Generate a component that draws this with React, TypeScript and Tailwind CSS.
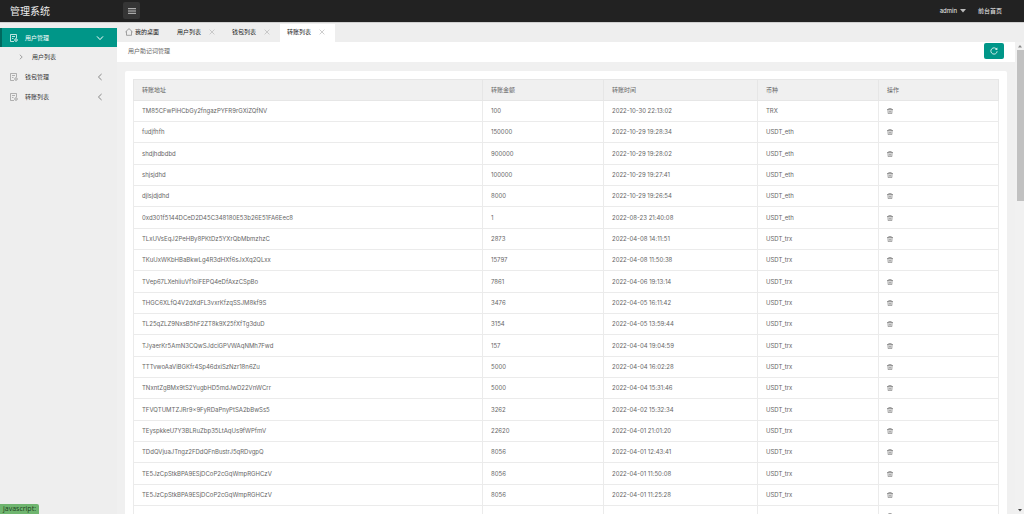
import { useState } from "react";
import { clsx } from "clsx";

type Transfer = {
    address: string;
    amount: string;
    time: string;
    coin: string;
};

const transfers: Transfer[] = [
    { address: "TM85CFwPiHCbGy2fngazPYFR9rGXiZQfNV", amount: "100", time: "2022-10-30 22:13:02", coin: "TRX" },
    { address: "fudjfhfh", amount: "150000", time: "2022-10-29 19:28:34", coin: "USDT_eth" },
    { address: "shdjhdbdbd", amount: "900000", time: "2022-10-29 19:28:02", coin: "USDT_eth" },
    { address: "shjsjdhd", amount: "100000", time: "2022-10-29 19:27:41", coin: "USDT_eth" },
    { address: "djlsjdjdhd", amount: "8000", time: "2022-10-29 19:26:54", coin: "USDT_eth" },
    { address: "0xd301f5144DCeD2D45C348180E53b26E51FA6Eec8", amount: "1", time: "2022-08-23 21:40:08", coin: "USDT_eth" },
    { address: "TLxUVsEqJ2PeHBy8PKtDz5YXrQbMbmzhzC", amount: "2873", time: "2022-04-08 14:11:51", coin: "USDT_trx" },
    { address: "TKuUxWKbHBaBkwLg4R3dHXf6sJxXq2QLxx", amount: "15797", time: "2022-04-08 11:50:38", coin: "USDT_trx" },
    { address: "TVep67LXehiiuVf1oiFEPQ4eDfAxzCSpBo", amount: "7861", time: "2022-04-06 19:13:14", coin: "USDT_trx" },
    { address: "THGC6XLfQ4V2dXdFL3vxrKfzqSSJM8kf9S", amount: "3476", time: "2022-04-05 16:11:42", coin: "USDT_trx" },
    { address: "TL25qZLZ9NxsB5hF2ZT8k9X25fXfTg3duD", amount: "3154", time: "2022-04-05 13:59:44", coin: "USDT_trx" },
    { address: "TJyaerKr5AmN3CQwSJdciGPVWAqNMh7Fwd", amount: "157", time: "2022-04-04 19:04:59", coin: "USDT_trx" },
    { address: "TTTvwoAaViBGKfr4Sp46dxiSzNzr18n6Zu", amount: "5000", time: "2022-04-04 16:02:28", coin: "USDT_trx" },
    { address: "TNxntZgBMx9tS2YugbHD5mdJwD22VnWCrr", amount: "5000", time: "2022-04-04 15:31:46", coin: "USDT_trx" },
    { address: "TFVQTUMTZJRr9x9FyRDaPnyPtSA2bBwSs5", amount: "3262", time: "2022-04-02 15:32:34", coin: "USDT_trx" },
    { address: "TEyspkkeU7Y3BLRuZbp35LtAqUs9fWPfmV", amount: "22620", time: "2022-04-01 21:01:20", coin: "USDT_trx" },
    { address: "TDdQVjuaJTngz2FDdQFnBustrJ5qRDvgpQ", amount: "8056", time: "2022-04-01 12:43:41", coin: "USDT_trx" },
    { address: "TE5JzCpStkBPA9ESjDCoP2cGqWmpRGHCzV", amount: "8056", time: "2022-04-01 11:50:08", coin: "USDT_trx" },
    { address: "TE5JzCpStkBPA9ESjDCoP2cGqWmpRGHCzV", amount: "8056", time: "2022-04-01 11:25:28", coin: "USDT_trx" },
    { address: "", amount: "", time: "", coin: "" },
];

const columns = ["转账地址", "转账金额", "转账时间", "币种", "操作"];

const DocIcon = () => (
    <svg viewBox="0 0 16 16" className="w-2 h-2 shrink-0" fill="none" stroke="currentColor" strokeWidth="1.5">
        <path d="M8 15H1V1h12v7" />
        <path d="M4 5h6M4 9h3" />
        <circle cx="12" cy="12" r="2.4" />
        <path d="M12 8.4v1.2M12 14.4v1.2M8.4 12h1.2M14.4 12h1.2" />
    </svg>
);

const ChevronIcon = ({ className }: { className: string }) => (
    <svg viewBox="0 0 8 8" className={clsx("shrink-0", className)} fill="none" stroke="currentColor">
        <path d="M5.6 1 2.4 4l3.2 3" />
    </svg>
);

const CloseIcon = () => (
    <svg viewBox="0 0 6 6" className="w-1.5 h-1.5" fill="none" stroke="currentColor" strokeWidth="0.7">
        <path d="M0.6 0.6l4.8 4.8M5.4 0.6L0.6 5.4" />
    </svg>
);

const TrashIcon = () => (
    <svg viewBox="0 0 12 12" className="w-1.5 h-1.5" fill="none" stroke="currentColor" strokeWidth="1.2">
        <path d="M0 3h12M3.6 2.8V0.8h4.8v2M1.8 3l0.6 8.2h7.2L10.2 3M4.8 5v4.4M7.2 5v4.4" />
    </svg>
);

const Header = () => (
    <header className="flex h-[22px] shrink-0 items-center bg-[#222222] pb-px text-[#eeeeee]">
        <h1 className="w-[123px] shrink-0 pl-2.5 text-[10px] leading-4">管理系统</h1>
        <button type="button" aria-label="菜单" className="flex h-[17px] w-[17px] items-center justify-center rounded-xs bg-[#353535]">
            <svg viewBox="0 0 8 6" className="h-1.5 w-2" stroke="currentColor" strokeWidth="0.8">
                <path d="M0 0.7h8M0 3h8M0 5.3h8" />
            </svg>
        </button>
        <nav className="ml-auto flex items-center gap-3 pr-[22px]">
            <button type="button" className="flex items-center gap-[3px]">
                admin
                <svg viewBox="0 0 6 4" className="h-1 w-1.5" fill="#bbbbbb">
                    <path d="M0 0h6L3 3.6z" />
                </svg>
            </button>
            <a href="#home">前台首页</a>
        </nav>
    </header>
);

const Sidebar = () => {
    const [open, setOpen] = useState(true);

    return (
        <aside className="w-[117px] shrink-0 bg-[#eeeeee] pt-[5px] text-[#333333]">
            <button
                type="button"
                onClick={() => setOpen(!open)}
                className="flex h-[19px] w-full items-center border-l-2 border-[#00695f] bg-[#009688] pl-2 pr-[13px] text-white"
            >
                <DocIcon />
                <span className="ml-[7px] mr-auto">用户管理</span>
                <ChevronIcon className="h-2 w-2 -rotate-90" />
            </button>
            {open && (
                <a href="#users" className="flex h-5 items-center pl-[18px]">
                    <ChevronIcon className="h-1.5 w-1.5 rotate-180 text-[#888888]" />
                    <span className="ml-2">用户列表</span>
                </a>
            )}
            {["钱包管理", "转账列表"].map((title) => (
                <button key={title} type="button" className="flex h-5 w-full items-center pl-2.5 pr-[13px]">
                    <span className="text-[#999999]">
                        <DocIcon />
                    </span>
                    <span className="ml-[7px] mr-auto">{title}</span>
                    <ChevronIcon className="h-2 w-2 text-[#888888]" />
                </button>
            ))}
        </aside>
    );
};

const Tabs = () => {
    const [active, setActive] = useState("转账列表");

    return (
        <div className="flex h-[19px] shrink-0 items-stretch bg-[#eeeeee] pt-px text-[#222222]">
            <button type="button" className="flex w-[53px] items-center gap-0.5 pb-[3px] pl-2">
                <svg viewBox="0 0 16 16" className="h-2 w-2" fill="none" stroke="#777777" strokeWidth="1.3">
                    <path d="M0.8 8 8 1.2 15.2 8M3 6.6v8h10v-8" />
                </svg>
                我的桌面
            </button>
            {["用户列表", "钱包列表", "转账列表"].map((title) => (
                <div
                    key={title}
                    className={clsx("flex w-[55px] items-center justify-between pb-[3px] pl-[7px] pr-2.5", active === title && "bg-white")}
                >
                    <button type="button" onClick={() => setActive(title)}>
                        {title}
                    </button>
                    <button type="button" aria-label="关闭" className="text-[#b8b8b8]">
                        <CloseIcon />
                    </button>
                </div>
            ))}
        </div>
    );
};

const TransferTable = () => (
    <table className="w-full table-fixed border-collapse text-left text-[#666666] [&_td]:border [&_td]:border-[#ebebeb] [&_td]:px-2 [&_th]:border [&_th]:border-[#e6e6e6] [&_th]:px-2">
        <colgroup>
            <col />
            <col className="w-[121px]" />
            <col className="w-[154px]" />
            <col className="w-[121px]" />
            <col className="w-[120px]" />
        </colgroup>
        <thead>
            <tr className="h-[21px] bg-[#f0f0f0]">
                {columns.map((title) => (
                    <th key={title} className="font-normal">
                        {title}
                    </th>
                ))}
            </tr>
        </thead>
        <tbody>
            {transfers.map((row, i) => (
                <tr key={i} className="h-[21px] nth-[3n]:h-[22px]">
                    <td>{row.address}</td>
                    <td>{row.amount}</td>
                    <td>{row.time}</td>
                    <td>{row.coin}</td>
                    <td>
                        <button type="button" aria-label="删除" className="block">
                            <TrashIcon />
                        </button>
                    </td>
                </tr>
            ))}
        </tbody>
    </table>
);

const Scrollbar = () => (
    <div className="flex w-[9px] shrink-0 flex-col items-center bg-[#f1f1f1] pl-px">
        <svg viewBox="0 0 8 8" className="h-2 w-2 shrink-0" fill="#888888">
            <path d="M2 5.4h4L4 3z" />
        </svg>
        <div className="h-[32%] w-[7px] bg-[#c1c1c1]" />
        <svg viewBox="0 0 8 8" className="mt-auto h-2 w-2 shrink-0" fill="#444444">
            <path d="M2 3h4L4 5.4z" />
        </svg>
    </div>
);

export default function App() {
    return (
        <div className="relative flex h-screen flex-col overflow-hidden bg-[#eeeeee] font-['Inter','Noto_Sans_CJK_SC',sans-serif] text-[6px] leading-2">
            <Header />
            <div className="flex min-h-0 flex-1 border-t border-[#d0d0d0]">
                <Sidebar />
                <div className="flex min-w-0 flex-1 flex-col">
                    <Tabs />
                    <div className="flex min-h-0 flex-1">
                        <main className="min-w-0 flex-1 overflow-hidden bg-[#f0f0f0]">
                            <div className="flex h-5 items-center justify-between bg-white pb-0.5 pl-[11px] pr-[11px] text-[#666666]">
                                <span>用户助记词管理</span>
                                <button
                                    type="button"
                                    aria-label="刷新"
                                    className="flex h-4 w-5 items-center justify-center rounded-xs bg-[#009688] text-white"
                                >
                                    <svg viewBox="0 0 16 16" className="h-2 w-2" fill="none" stroke="currentColor" strokeWidth="1.6">
                                        <path d="M13.6 5A6.3 6.3 0 1 0 14.3 8.6" />
                                        <path d="M14.6 1v4.6H10z" fill="currentColor" stroke="none" />
                                    </svg>
                                </button>
                            </div>
                            <div className="mx-2 mt-[9px] rounded-xs bg-white p-2">
                                <TransferTable />
                            </div>
                        </main>
                        <Scrollbar />
                    </div>
                </div>
            </div>
            <div className="absolute bottom-0 left-0 rounded-tr-xs bg-[#6fb56f] px-[3px] py-px font-['Open_Sans',sans-serif] text-[7px] text-[#1c401c]">
                javascript:
            </div>
        </div>
    );
}
